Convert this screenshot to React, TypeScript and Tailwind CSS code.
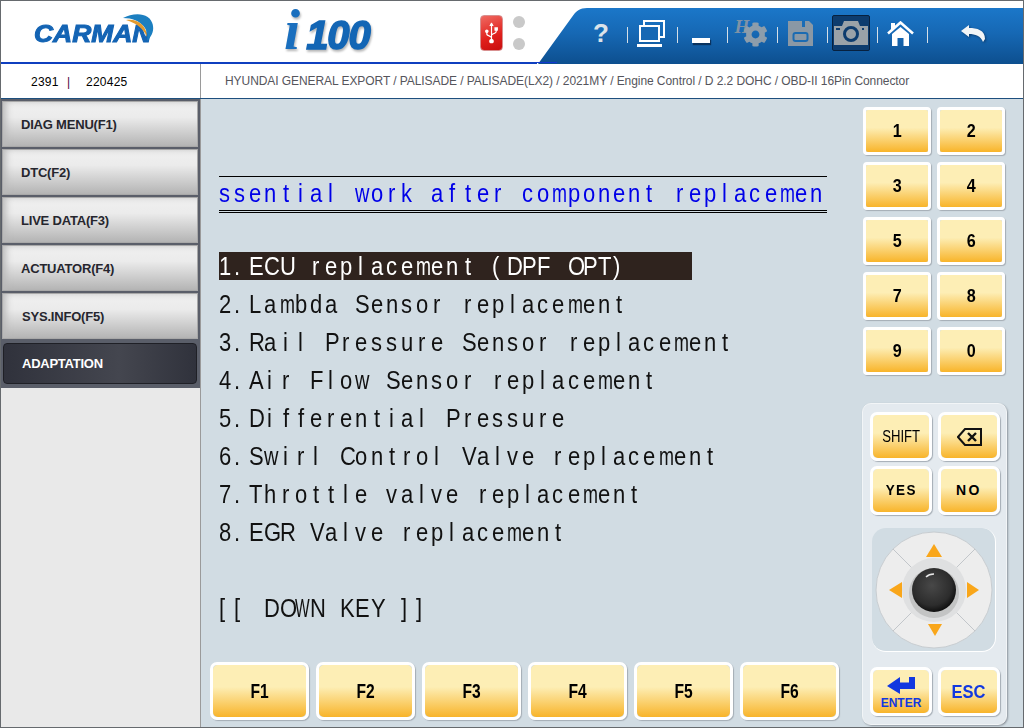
import React from "react";
import { FaCog, FaUsb } from "react-icons/fa";

function Cells({ text }: { text: string }) {
  return (
    <>
      {text.split("").map((c, i) => {
        const off = "il".includes(c) ? "ml-[3px]" : "ftj".includes(c) ? "ml-[3px]" : c === "r" ? "ml-[2px]" : "ml-0";
        const sc = c === "m" ? "scale-x-[0.72]" : c === "w" ? "scale-x-[0.8]" : c === "W" ? "scale-x-[0.62]" : "scale-x-[0.88]";
        return (
          <span key={i} className="inline-block w-[15.16px] whitespace-pre">
            <span className={`inline-block origin-left ${sc} ${off}`}>{c}</span>
          </span>
        );
      })}
    </>
  );
}

const keyFace = "bg-[linear-gradient(180deg,#fdeeb5_0%,#fdeeb5_42%,#f8b42a_100%)]";

function Key({ className, children, round }: { className: string; children: React.ReactNode; round?: boolean }) {
  return (
    <div className={`${className} shrink-0 border-[3px] border-white ${round ? "rounded-[7px]" : "rounded-[4px]"} shadow-[1px_1px_1px_#a4acb4] flex`}>
      <div className={`flex-1 ${round ? "rounded-[5px]" : "rounded-[2px]"} ${keyFace} flex items-center justify-center text-black`}>
        {children}
      </div>
    </div>
  );
}

function Sep() {
  return <div className="w-px h-[16px] mt-[4px] bg-[#d5dfe7] shrink-0" />;
}

function Cell({ w, children }: { w: string; children: React.ReactNode }) {
  return <div className={`${w} h-full pr-[4px] flex items-center justify-center shrink-0`}>{children}</div>;
}

function SideBtn({ label, pl }: { label: string; pl: string }) {
  return (
    <div className={`h-[46px] w-[196px] ${pl} pt-[1px] flex items-center text-[13px] tracking-[-0.2px] font-bold text-[#26262e] border border-[#a8a8a8] bg-[linear-gradient(180deg,#f1f1f1_0%,#ebebeb_35%,#b4b4b4_100%)] shadow-[inset_7px_3px_7px_-4px_#b9b9b9]`}>
      {label}
    </div>
  );
}

const rows = [
  "2.Lambda Sensor replacement",
  "3.Rail Pressure Sensor replacement",
  "4.Air Flow Sensor replacement",
  "5.Differential Pressure",
  "6.Swirl Control Valve replacement",
  "7.Throttle valve replacement",
  "8.EGR Valve replacement",
];

export default function App() {
  return (
    <div className="w-[1024px] h-[728px] border border-[#666a6e] flex flex-col overflow-hidden bg-white font-['Liberation_Sans',Arial,sans-serif]">
      {/* header */}
      <div className="h-[63px] flex shrink-0">
        <div className="w-[536px] shrink-0 border-b-2 border-[#0f3fbf] pt-[2px] flex items-center">
          <div className="relative ml-[33px] w-[122px] h-[40px] shrink-0">
            <div className="pt-[8px] text-[24px] leading-[26px] font-bold italic text-[#1464b4] inline-block origin-left scale-x-110 [-webkit-text-stroke:1px_#1464b4]">CARMAN</div>
            <svg className="absolute left-0 top-0 overflow-visible" width="122" height="40" viewBox="0 0 122 40">
              <path d="M89 5 C100 -1 117 -1 119 13 C120 19 117 24 113 28 C116 18 108 5 89 5Z" fill="#1c7fc0" />
              <path d="M92 7 C103 5 113 12 113 24 C109 15 102 10 92 7Z" fill="#e39a2d" />
            </svg>
          </div>
          <div className="ml-[128px] w-[92px] shrink-0 flex items-end h-[46px] drop-shadow-[1px_2px_1px_#b5b5b5]">
            <span className="-mb-[3px] pr-[4px] font-['Liberation_Serif',serif] italic font-bold text-[58px] leading-[58px] text-[#1a6fbe]">i</span>
            <span className="ml-[2px] text-[40px] leading-[42px] italic font-bold text-[#1366b5] tracking-[-1px] [-webkit-text-stroke:1.5px_#1366b5]">100</span>
          </div>
          <div className="ml-[104px] w-[23px] h-[36px] rounded-[4px] bg-[linear-gradient(160deg,#ef6a62_0%,#e0201c_60%,#c80e0e_100%)] border border-[#d89090] flex items-center justify-center shrink-0">
            <FaUsb className="text-white text-[24px] -rotate-90" />
          </div>
          <div className="ml-[10px] flex flex-col gap-[10px] shrink-0">
            <div className="w-[12px] h-[12px] rounded-full bg-[#c9c9c9]" />
            <div className="w-[12px] h-[12px] rounded-full bg-[#c9c9c9]" />
          </div>
        </div>
        <div className="flex-1 flex items-end">
          <svg width="50" height="56" viewBox="0 0 50 56" className="shrink-0 block">
            <defs>
              <linearGradient id="barg" x1="0" y1="0" x2="0" y2="1">
                <stop offset="0" stopColor="#1b77c9" />
                <stop offset="0.45" stopColor="#1668b4" />
                <stop offset="1" stopColor="#0d4f8f" />
              </linearGradient>
            </defs>
            <path d="M1 56 L35 9 C39 3 43 0 50 0 L50 56 Z" fill="url(#barg)" />
            <rect x="0" y="54" width="20" height="1" fill="#1237d0" />
          </svg>
          <div className="flex-1 h-[56px] pb-[6px] flex items-center bg-[linear-gradient(180deg,#1b77c9_0%,#1668b4_45%,#0d4f8f_100%)]">
            <div className="w-[28px] flex justify-center shrink-0"><span className="text-[26px] font-bold text-[#dbe3ea] leading-none">?</span></div>
            <div className="w-[12px]" />
            <Sep />
            <Cell w="w-[49px]">
              <svg width="28" height="27" viewBox="0 0 28 27" fill="none" stroke="#ffffff" strokeWidth="2">
                <path d="M7 6V1H27V17H23" />
                <rect x="3" y="6" width="19" height="15" fill="#1668b4" />
                <path d="M0 25.5H25" strokeWidth="3" />
              </svg>
            </Cell>
            <Sep />
            <Cell w="w-[49px]"><div className="w-[18px] h-[5px] mt-[14px] bg-white shadow-[1px_2px_1px_#0a335f]" /></Cell>
            <Sep />
            <Cell w="w-[49px]">
              <div className="relative w-[32px] h-[28px]">
                <span className="absolute left-0 -top-[2px] font-['Liberation_Serif',serif] italic font-bold text-[19px] leading-none text-[#7f92a6]">H</span>
                <FaCog className="absolute left-[8px] top-[3px] text-[25px] text-[#8d9dab]" />
              </div>
            </Cell>
            <Sep />
            <Cell w="w-[49px]">
              <svg width="25" height="25" viewBox="0 0 25 25">
                <path d="M0 0H21L25 4V25H0Z" fill="#8a98a5" />
                <rect x="14" y="0" width="3" height="6" fill="#1a6cb6" />
                <rect x="5.5" y="12" width="14" height="8" rx="2" fill="#8a98a5" stroke="#1b6bb2" strokeWidth="2" />
              </svg>
            </Cell>
            <Sep />
            <Cell w="w-[49px]">
              <div className="w-[38px] h-[36px] rounded-[2px] bg-[#0d3c6e] border border-[#07213f] flex items-center justify-center">
                <svg width="34" height="24" viewBox="0 0 34 24">
                  <path d="M0 5H8L10 0H24L26 5H34V24H0Z" fill="#9aa2a8" />
                  <circle cx="17" cy="13" r="6.5" fill="none" stroke="#0d3c6e" strokeWidth="3" />
                  <rect x="2" y="7" width="4" height="2" fill="#0d3c6e" />
                  <rect x="28" y="7" width="2" height="2" fill="#0d3c6e" />
                </svg>
              </div>
            </Cell>
            <Sep />
            <Cell w="w-[49px]">
              <svg width="27" height="25" viewBox="0 0 27 25" fill="#ffffff">
                <rect x="4" y="2" width="4" height="6" />
                <path d="M1 12.5L13.5 1.5L26 12.5" fill="none" stroke="#ffffff" strokeWidth="2.6" />
                <path d="M5 13L13.5 6L22 13V25H16.5V17H10.5V25H5Z" />
              </svg>
            </Cell>
            <Sep />
            <div className="w-[90px] h-full flex items-center justify-center shrink-0">
              <svg width="24" height="17" viewBox="0 0 24 17" className="drop-shadow-[1px_1px_1px_#0a3a6c]">
                <path d="M0 6L8 0V3C16 3 24 5 24 14L22 17C20 11 14 9 8 9V12Z" fill="#f2f5f7" />
              </svg>
            </div>
          </div>
        </div>
      </div>
      {/* path row */}
      <div className="h-[35px] shrink-0 flex border-b border-[#1d4f7e] text-[12px]">
        <div className="w-[200px] shrink-0 border-r border-[#9a9a9a] flex items-center pl-[30px] pt-[2px] text-black tracking-[0.25px]">
          <span className="w-[36px]">2391</span>
          <span className="w-[19px] text-[#500040]">|</span>
          <span>220425</span>
        </div>
        <div className="pl-[24px] flex items-center text-[#55555c] tracking-[-0.07px]">
          HYUNDAI GENERAL EXPORT / PALISADE / PALISADE(LX2) / 2021MY / Engine Control / D 2.2 DOHC / OBD-II 16Pin Connector
        </div>
      </div>
      {/* body */}
      <div className="flex-1 flex min-h-0">
        <div className="w-[200px] shrink-0 bg-[#e9e9e9] border-r border-[#9a9a9a] flex flex-col">
          <div className="bg-[#5a5e69] pl-[1px] pt-[2px] pb-[4px] flex flex-col gap-[2px] h-[289px]">
            <SideBtn label="DIAG MENU(F1)" pl="pl-[18px]" />
            <SideBtn label="DTC(F2)" pl="pl-[18px]" />
            <SideBtn label="LIVE DATA(F3)" pl="pl-[18px]" />
            <SideBtn label="ACTUATOR(F4)" pl="pl-[18px]" />
            <SideBtn label="SYS.INFO(F5)" pl="pl-[19px]" />
            <div className="mt-[2px] h-[41px] w-[194px] ml-[1px] pl-[18px] flex items-center rounded-[4px] border border-[#1f2026] text-[13px] tracking-[-0.25px] font-bold text-white bg-[linear-gradient(90deg,#30323c_0%,#44464f_60%,#30323c_100%)]">
              ADAPTATION
            </div>
          </div>
        </div>
        <div className="flex-1 flex bg-[#d1dce3] min-w-0">
          <div className="flex-1 flex flex-col min-w-0">
            <div className="pl-[18px] pt-[77px] text-[25px] leading-[29px] text-[#111]">
              <div className="w-[608px] h-[37px] border-t border-b-[3px] border-t-black border-b-black border-double flex items-center overflow-hidden whitespace-nowrap text-[#0000e8]">
                <div><Cells text="ssential work after component replacemen" /></div>
              </div>
              <div className="mt-[39px] w-[473px] h-[28px] bg-[#2f231e] text-white whitespace-nowrap">
                <Cells text="1.ECU replacement (DPF OPT)" />
              </div>
              <div className="mt-[10px] flex flex-col gap-[10px]">
                {rows.map((r) => (
                  <div key={r} className="h-[28px] whitespace-nowrap"><Cells text={r} /></div>
                ))}
              </div>
              <div className="mt-[48px] h-[28px] whitespace-nowrap"><Cells text="[[ DOWN KEY ]]" /></div>
            </div>
            <div className="mt-auto mb-[7px] pl-[9px] flex gap-[7px]">
              {["F1", "F2", "F3", "F4", "F5", "F6"].map((f) => (
                <Key key={f} round className="w-[99px] h-[58px]">
                  <span className="text-[20px] font-bold inline-block scale-x-[0.78]">{f}</span>
                </Key>
              ))}
            </div>
          </div>
          <div className="w-[168px] shrink-0 flex flex-col">
            <div className="pl-[8px] pt-[8px] grid grid-cols-[68px_68px] gap-x-[6px] gap-y-[7px]">
              {["1", "2", "3", "4", "5", "6", "7", "8", "9", "0"].map((n) => (
                <Key key={n} className="w-[68px] h-[48px]">
                  <span className="text-[19px] font-bold inline-block scale-x-[0.85]">{n}</span>
                </Key>
              ))}
            </div>
            <div className="ml-[7px] mt-[28px] w-[145px] h-[322px] rounded-[9px] bg-[#e4eaef] border border-[#f2f5f7] shadow-[1px_1px_2px_#8e969e] pl-[7px] pt-[8px]">
              <div className="grid grid-cols-[62px_62px] gap-x-[6px] gap-y-[5px]">
                <Key round className="w-[62px] h-[49px]"><span className="text-[16px] inline-block scale-x-[0.82]">SHIFT</span></Key>
                <Key round className="w-[62px] h-[49px]">
                  <svg width="25" height="18" viewBox="0 0 25 18" fill="none" stroke="#111" strokeWidth="2">
                    <path d="M8 1H24V17H8L1 9Z" />
                    <path d="M11 5L19 13M19 5L11 13" strokeWidth="2.4" />
                  </svg>
                </Key>
                <Key round className="w-[62px] h-[49px]"><span className="text-[15px] font-bold tracking-[1.5px] inline-block scale-x-[0.9]">YES</span></Key>
                <Key round className="w-[62px] h-[49px]"><span className="text-[14px] font-bold tracking-[2.5px]">NO</span></Key>
              </div>
              <div className="mt-[13px] ml-[2px] w-[124px] h-[124px] rounded-[14px] bg-[#d1dce3] border-r border-b border-white flex items-center justify-center">
                <svg width="118" height="118" viewBox="0 0 118 118">
                  <defs>
                    <radialGradient id="knob" cx="0.45" cy="0.4" r="0.6">
                      <stop offset="0" stopColor="#484848" />
                      <stop offset="0.75" stopColor="#2c2c2c" />
                      <stop offset="1" stopColor="#101010" />
                    </radialGradient>
                  </defs>
                  <circle cx="59" cy="59" r="58" fill="#ededed" stroke="#c8cdd1" />
                  <path d="M18 18L100 100M100 18L18 100" stroke="#c2c6ca" strokeWidth="1" />
                  <circle cx="59" cy="59" r="32" fill="#dfe0e1" />
                  <path d="M59 13L67 26H51Z" fill="#f9a61a" />
                  <path d="M60 105L53 93H67Z" fill="#f9a61a" />
                  <path d="M14 59L27 51V67Z" fill="#f9a61a" />
                  <path d="M104 59L92 51V67Z" fill="#f9a61a" />
                  <circle cx="59" cy="62" r="25" fill="#a8a8a8" opacity="0.5" />
                  <circle cx="59" cy="59" r="22" fill="url(#knob)" />
                  <path d="M51 46C53 44 56 43 59 43" stroke="#e8e8e8" strokeWidth="1.5" fill="none" />
                </svg>
              </div>
              <div className="mt-[15px] flex gap-[6px]">
                <Key round className="w-[62px] h-[49px]">
                  <div className="pt-[3px] flex flex-col items-center text-[#1238e0]">
                    <svg width="28" height="17" viewBox="0 0 28 17" fill="#1238e0">
                      <path d="M0 9L13 0V5.5H22V0H28V12H13V17Z" />
                    </svg>
                    <span className="text-[12px] font-bold leading-[13px] mt-[3px]">ENTER</span>
                  </div>
                </Key>
                <Key round className="w-[62px] h-[49px]"><span className="pt-[1px] text-[18px] font-bold text-[#1238e0] inline-block scale-x-[0.92]">ESC</span></Key>
              </div>
            </div>
          </div>
        </div>
      </div>
    </div>
  );
}
